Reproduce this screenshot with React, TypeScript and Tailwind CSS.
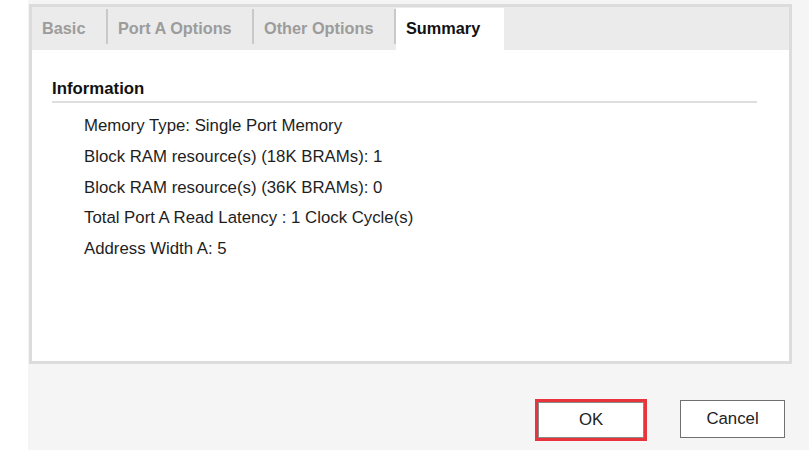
import React from "react";

const tabs = [
    {name: "Basic", width: "w-[74px]"},
    {name: "Port A Options", width: "w-[144px]"},
    {name: "Other Options", width: "w-[140px]"},
];

const summaryLines = [
    "Memory Type: Single Port Memory",
    "Block RAM resource(s) (18K BRAMs): 1",
    "Block RAM resource(s) (36K BRAMs): 0",
    "Total Port A Read Latency : 1 Clock Cycle(s)",
    "Address Width A: 5",
];

function App() {
    return (
        <div className="h-[455px] w-[809px] bg-white font-['Liberation_Sans',Arial,sans-serif] overflow-hidden">
            <div className="ml-[28px] h-[450px] bg-[#f5f5f5] pt-[4px] flex flex-col">
                {/* tab panel */}
                <div className="ml-px w-[763px] h-[360px] border-[3px] border-[#dcdcdc] bg-white flex flex-col">
                    <div className="h-[43px] bg-[#ebebeb] flex items-stretch">
                        {tabs.map((tab, index) => (
                            <React.Fragment key={index}>
                                <div className={"flex items-center pl-[10px] text-[16.3px] font-bold text-[#9c9c9c] " + tab.width}>
                                    {tab.name}
                                </div>
                                <div className="w-[2px] bg-[#c9c9c9] my-[2px] mb-[6px]"></div>
                            </React.Fragment>
                        ))}
                        <div className="mt-px w-[108px] bg-white flex items-center pl-[10px] pb-[2px] text-[16.3px] font-bold text-[#111]">
                            Summary
                        </div>
                    </div>
                    <div className="flex-1 pl-[20px] pr-[32px] pt-[29px]">
                        <div className="text-[16.8px] font-bold text-[#111] leading-[20px]">Information</div>
                        <div className="mt-[2px] h-[2px] bg-[#dedede]"></div>
                        <div className="pl-[32px] pt-[8px]">
                            {summaryLines.map((line, index) => (
                                <div key={index} className="text-[16.8px] text-[#1e1e1e] leading-[30.75px]">{line}</div>
                            ))}
                        </div>
                    </div>
                </div>
                {/* buttons */}
                <div className="flex-1 flex items-start justify-end gap-[33px] pr-[24px] pt-[35px]">
                    <div className="w-[112px] h-[42px] border-[3px] border-[#e8353b]">
                        <button className="w-full h-full border border-[#8a8a8a] bg-white text-[16.8px] text-[#222]">OK</button>
                    </div>
                    <button className="mt-px w-[105px] h-[38px] border border-[#707070] bg-white text-[16.8px] text-[#222]">Cancel</button>
                </div>
            </div>
        </div>
    );
}

export default App;
